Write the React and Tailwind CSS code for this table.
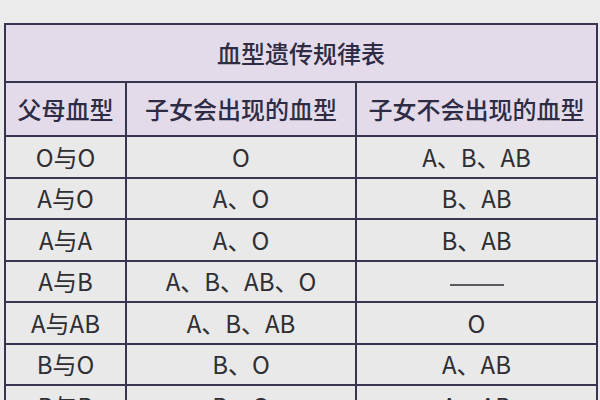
export default function App() {
  const rows = [
    ["O与O", "O", "A、B、AB"],
    ["A与O", "A、O", "B、AB"],
    ["A与A", "A、O", "B、AB"],
    ["A与B", "A、B、AB、O", "——"],
    ["A与AB", "A、B、AB", "O"],
    ["B与O", "B、O", "A、AB"],
    ["B与B", "B、O", "A、AB"],
  ];

  return (
    <div
      className="w-[600px] h-[400px] overflow-hidden bg-[#ebebeb] pt-[23px] pl-[4px]"
      style={{ fontFamily: '"Noto Sans CJK SC", "Noto Sans", sans-serif' }}
    >
      <table className="w-[592px] table-fixed border-collapse border-2 border-[#37354f] text-[24px] leading-none">
        <colgroup>
          <col className="w-[121px]" />
          <col className="w-[230px]" />
          <col className="w-[241px]" />
        </colgroup>
        <thead>
          {/* title + header rows */}
          <tr className="h-[58px] bg-[#e4dbea]">
            <th
              colSpan={3}
              className="border-2 border-[#37354f] text-center font-medium text-[#2e2c44]"
            >
              血型遗传规律表
            </th>
          </tr>
          <tr className="h-[54px] bg-[#e4dbea]">
            <th className="border-2 border-[#37354f] text-center font-medium text-[#2e2c44]">
              父母血型
            </th>
            <th className="border-2 border-[#37354f] text-center font-medium text-[#2e2c44]">
              子女会出现的血型
            </th>
            <th className="border-2 border-[#37354f] text-center font-medium text-[#2e2c44]">
              子女不会出现的血型
            </th>
          </tr>
        </thead>
        <tbody>
          {rows.map((r, i) => (
            <tr key={i} className="h-[41.5px] bg-[#e9e9e9]">
              {r.map((c, j) => (
                <td
                  key={j}
                  className="border-2 border-[#37354f] text-center text-[#2f2f33]"
                >
                  {c === "——" ? (
                    <span className="inline-block w-[54px] h-[2px] bg-[#5a5a60] align-middle" />
                  ) : (
                    c
                  )}
                </td>
              ))}
            </tr>
          ))}
        </tbody>
      </table>
    </div>
  );
}
